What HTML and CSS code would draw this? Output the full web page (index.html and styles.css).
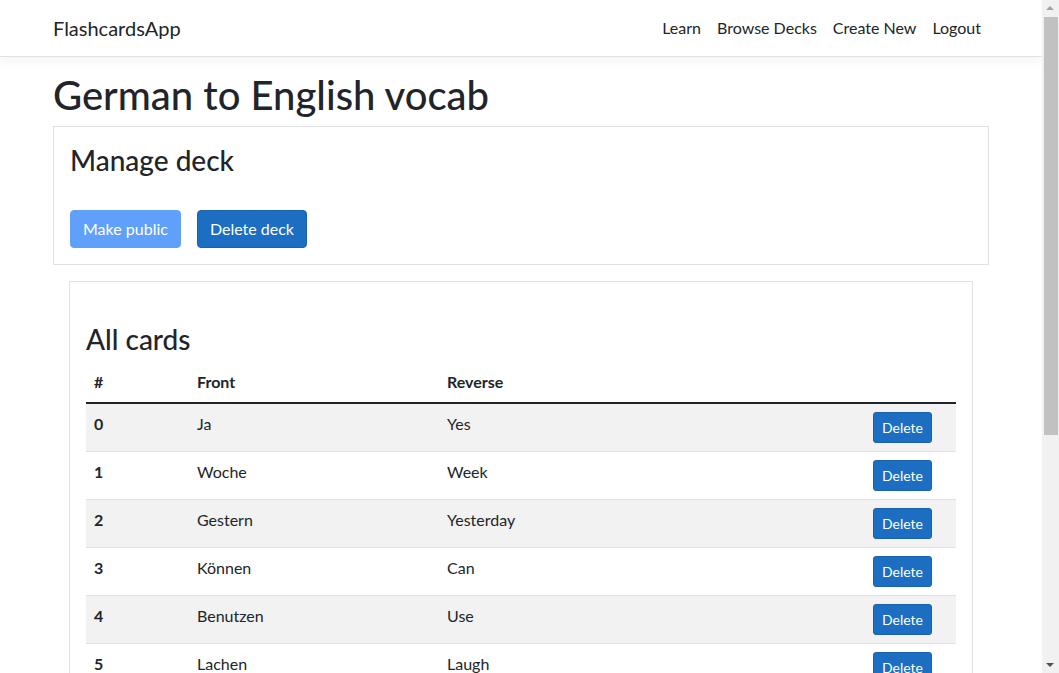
FILE: index.html
```html
<!DOCTYPE html>
<html lang="en">
<head>
<meta charset="utf-8">
<title>FlashcardsApp</title>
<link rel="stylesheet" href="styles.css">
</head>
<body>
<div class="page">
  <header class="navbar">
    <div class="container nav-inner">
      <a class="brand" href="#">FlashcardsApp</a>
      <nav class="nav-links">
        <a href="#">Learn</a>
        <a href="#">Browse Decks</a>
        <a href="#">Create New</a>
        <a href="#">Logout</a>
      </nav>
    </div>
  </header>
  <main class="container">
    <h1 class="title">German to English vocab</h1>
    <section class="card manage">
      <h3 class="card-title">Manage deck</h3>
      <div class="btn-row">
        <button class="btn btn-light-primary">Make public</button>
        <button class="btn btn-primary">Delete deck</button>
      </div>
    </section>
    <section class="card cards">
      <h3 class="card-title cards-title">All cards</h3>
      <table class="table">
        <colgroup>
          <col class="c-num"><col class="c-front"><col class="c-rev"><col class="c-act">
        </colgroup>
        <thead>
          <tr><th>#</th><th>Front</th><th>Reverse</th><th></th></tr>
        </thead>
        <tbody>
          <tr><th>0</th><td>Ja</td><td>Yes</td><td class="act"><button class="btn btn-sm btn-primary">Delete</button></td></tr>
          <tr><th>1</th><td>Woche</td><td>Week</td><td class="act"><button class="btn btn-sm btn-primary">Delete</button></td></tr>
          <tr><th>2</th><td>Gestern</td><td>Yesterday</td><td class="act"><button class="btn btn-sm btn-primary">Delete</button></td></tr>
          <tr><th>3</th><td>Können</td><td>Can</td><td class="act"><button class="btn btn-sm btn-primary">Delete</button></td></tr>
          <tr><th>4</th><td>Benutzen</td><td>Use</td><td class="act"><button class="btn btn-sm btn-primary">Delete</button></td></tr>
          <tr><th>5</th><td>Lachen</td><td>Laugh</td><td class="act"><button class="btn btn-sm btn-primary">Delete</button></td></tr>
        </tbody>
      </table>
    </section>
  </main>
</div>
<div class="scrollbar" aria-hidden="true">
  <div class="sb-up"></div>
  <div class="sb-track"><div class="sb-thumb"></div></div>
  <div class="sb-down"></div>
</div>
</body>
</html>
```

FILE: styles.css
```css
* { box-sizing: border-box; }
html, body { height: 100%; overflow: hidden; }
body {
  margin: 0;
  font-family: Lato, "Noto Sans", "Liberation Sans", sans-serif;
  font-size: 16px;
  line-height: 1.5;
  color: #212529;
  background: #fff;
}
.page { margin-right: 17px; }
.container {
  max-width: 960px;
  margin: 0 auto;
  padding: 0 12px;
}
.navbar {
  height: 57px;
  background: #fff;
  border-bottom: 1px solid #dee2e6;
  box-shadow: 0 4px 12px rgba(0,0,0,.05);
}
.nav-inner {
  height: 56px;
  display: flex;
  align-items: center;
  justify-content: space-between;
}
.brand {
  font-size: 20px;
  color: #212529;
  text-decoration: none;
  line-height: 30px;
}
.nav-links { display: flex; }
.nav-links a {
  color: #212529;
  text-decoration: none;
  padding: 8px;
  line-height: 24px;
}
.title {
  font-size: 40px;
  font-weight: 500;
  line-height: 48px;
  margin: 14px 0 7px;
}
.card {
  border: 1px solid #dee2e6;
  background: #fff;
  padding: 16px;
}
.card-title {
  font-size: 28px;
  font-weight: 500;
  line-height: 34px;
  margin: 0;
}
.manage .card-title { margin-bottom: 33px; }
.btn-row { display: flex; gap: 16px; }
.btn {
  font-family: inherit;
  font-size: 16px;
  line-height: 24px;
  padding: 6px 12px;
  border: 1px solid transparent;
  border-radius: 4px;
  color: #fff;
  cursor: pointer;
}
.btn-primary { background: #1b6ec2; border-color: #1861ac; }
.btn-light-primary { background: #5fa0fb; border-color: #5fa0fb; }
.btn-sm {
  font-size: 14px;
  line-height: 21px;
  padding: 4px 8px;
  border-radius: 3px;
}
.cards { margin: 16px 16px 0; }
.cards-title { margin-top: 24px; margin-bottom: 6px; }
.table {
  width: 100%;
  border-collapse: collapse;
}
.c-num { width: 103px; }
.c-front { width: 250px; }
.c-act { width: 90px; }
.table th, .table td {
  padding: 8px;
  text-align: left;
  vertical-align: top;
  border-bottom: 1px solid #dee2e6;
}
.table thead th {
  font-weight: 700;
  border-bottom: 2px solid #212529;
}
.table tbody th { font-weight: 700; }
.table tbody tr:nth-child(odd) { background: #f2f2f2; }
.table td.act { padding-right: 24px; text-align: right; }
.act .btn { display: inline-block; vertical-align: top; }

.scrollbar {
  position: fixed;
  top: 0;
  right: 0;
  width: 17px;
  height: 100%;
  background: #f1f1f1;
  display: flex;
  flex-direction: column;
}
.sb-up, .sb-down { height: 17px; position: relative; }
.sb-up::after, .sb-down::after {
  content: "";
  position: absolute;
  left: 4px;
  border-left: 4px solid transparent;
  border-right: 4px solid transparent;
}
.sb-up::after { top: 6px; border-bottom: 4px solid #a3a3a3; }
.sb-down::after { top: 7px; border-top: 4px solid #505050; }
.sb-track { flex: 1; padding: 0 1px 0 2px; }
.sb-thumb { height: 418px; background: #c1c1c1; }
```
